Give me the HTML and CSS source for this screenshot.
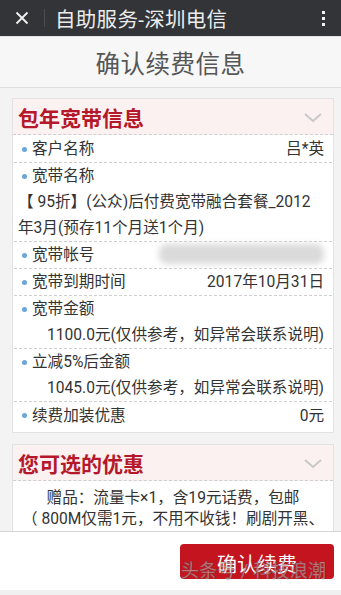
FILE: index.html
```html
<!DOCTYPE html>
<html lang="zh">
<head>
<meta charset="utf-8">
<link rel="stylesheet" href="styles.css">
</head>
<body>
<div class="page">
  <div class="topbar">
    <span class="close">
      <svg width="14" height="14" viewBox="0 0 14 14"><path d="M1.5 1.5 L12.5 12.5 M12.5 1.5 L1.5 12.5" stroke="#f2f2f2" stroke-width="1.8" fill="none"/></svg>
    </span>
    <span class="divider"></span>
    <span class="apptitle">自助服务-深圳电信</span>
    <span class="dots"><i></i><i></i><i></i></span>
  </div>
  <div class="header">确认续费信息</div>
  <div class="content">
    <div class="card">
      <div class="card-head">
        <span class="card-title">包年宽带信息</span>
        <svg class="chev" width="18" height="10" viewBox="0 0 18 10"><path d="M1 1 L9 8 L17 1" stroke="#c8c8c8" stroke-width="2" fill="none"/></svg>
      </div>
      <div class="row">
        <span class="label"><b class="dot"></b>客户名称</span>
        <span class="val">吕*英</span>
      </div>
      <div class="row col">
        <span class="label"><b class="dot"></b>宽带名称</span>
        <span class="para">【 95折】(公众)后付费宽带融合套餐_2012年3月(预存11个月送1个月)</span>
      </div>
      <div class="row">
        <span class="label"><b class="dot"></b>宽带帐号</span>
        <span class="blur"></span>
      </div>
      <div class="row">
        <span class="label"><b class="dot"></b>宽带到期时间</span>
        <span class="val">2017年10月31日</span>
      </div>
      <div class="row col">
        <span class="label"><b class="dot"></b>宽带金额</span>
        <span class="val right">1100.0元(仅供参考，如异常会联系说明)</span>
      </div>
      <div class="row col">
        <span class="label"><b class="dot"></b>立减5%后金额</span>
        <span class="val right">1045.0元(仅供参考，如异常会联系说明)</span>
      </div>
      <div class="row last">
        <span class="label"><b class="dot"></b>续费加装优惠</span>
        <span class="val">0元</span>
      </div>
    </div>
    <div class="card">
      <div class="card-head">
        <span class="card-title">您可选的优惠</span>
        <svg class="chev" width="18" height="10" viewBox="0 0 18 10"><path d="M1 1 L9 8 L17 1" stroke="#c8c8c8" stroke-width="2" fill="none"/></svg>
      </div>
      <div class="offer">赠品：流量卡×1，含19元话费，包邮<br>（ 800M仅需1元，不用不收钱！刷剧开黑、<br>车载热点，流量无忧！）</div>
    </div>
  </div>
  <div class="footer">
    <button class="confirm">确认续费</button>
    <span class="watermark">头条号 / 科技浪潮</span>
  </div>
  <div class="bottomstrip"></div>
</div>
</body>
</html>
```
FILE: styles.css
```css
* { box-sizing: border-box; }
html, body { margin: 0; padding: 0; }
body {
  font-family: Roboto, "Noto Sans CJK SC", sans-serif;
  background: #f3f3f3;
  color: #333;
}
.page {
  width: 341px;
  height: 595px;
  display: flex;
  flex-direction: column;
  overflow: hidden;
}
.topbar {
  height: 36px;
  flex: none;
  background: #323437;
  display: flex;
  align-items: center;
  padding-left: 15px;
  color: #ececec;
}
.close { display: flex; width: 14px; height: 14px; }
.divider {
  width: 1px;
  height: 18px;
  background: #4a4c4f;
  margin-left: 15px;
}
.apptitle {
  margin-left: 10px;
  font-size: 20.5px;
  letter-spacing: 0.3px;
  flex: 1;
}
.dots {
  display: flex;
  flex-direction: column;
  gap: 3px;
  margin-right: 16px;
}
.dots i {
  display: block;
  width: 3px;
  height: 3px;
  background: #f2f2f2;
}
.header {
  height: 52px;
  flex: none;
  background: #f7f7f7;
  border-top: 1px solid #e4e4e4;
  border-bottom: 1px solid #dedede;
  display: flex;
  align-items: center;
  justify-content: center;
  font-size: 24.5px;
  color: #565656;
  letter-spacing: 0.5px;
}
.content {
  flex: 1;
  overflow: hidden;
  padding: 10px 7px 0 12px;
  display: flex;
  flex-direction: column;
  gap: 11px;
}
.card {
  flex: none;
  background: #fff;
  border: 1px solid #e2e2e2;
  padding: 0 1px;
}
.card-head {
  height: 36px;
  background: #fcf1f1;
  border-bottom: 1px dashed #cfcfcf;
  margin: 0 -1px;
  display: flex;
  align-items: center;
  justify-content: space-between;
  padding: 0 11px 0 5px;
}
.card-title {
  font-size: 21px;
  font-weight: bold;
  color: #b5172b;
}
.chev { margin-top: 2px; }
.row {
  display: flex;
  justify-content: space-between;
  align-items: center;
  min-height: 27px;
  border-bottom: 1px dashed #cfcfcf;
  font-size: 15.6px;
  line-height: 26px;
  padding: 0 8px 0 4px;
}
.row:nth-child(2) { padding-top: 1px; }
.row.col {
  flex-direction: column;
  align-items: stretch;
}
.row.last { border-bottom: none; margin-bottom: 3px; }
.label { display: flex; align-items: center; color: #333; }
.dot {
  display: inline-block;
  width: 5px;
  height: 5px;
  border-radius: 50%;
  background: #6aa6d8;
  margin: 0 5px 0 4px;
}
.val { color: #333; }
.val.right { text-align: right; }
.para { color: #333; }
.blur {
  width: 165px;
  height: 20px;
  background: #dadada;
  filter: blur(3px);
  border-radius: 8px;
  margin-top: -2px;
}
.offer {
  text-align: center;
  font-size: 15.6px;
  line-height: 21px;
  padding: 7px 4px 8px;
  color: #333;
}
.footer {
  height: 59px;
  flex: none;
  background: #fff;
  border-top: 1px solid #d4d4d4;
  position: relative;
  display: flex;
  justify-content: flex-end;
  align-items: center;
  padding-right: 7px;
}
.confirm {
  width: 154px;
  height: 35px;
  margin-top: 1px;
  background: #c3141f;
  border: none;
  border-radius: 4px;
  color: #fff;
  font-family: Roboto, "Noto Sans CJK SC", sans-serif;
  font-size: 20px;
  padding: 4px 0 0;
}
.watermark {
  position: absolute;
  left: 181px;
  top: 24px;
  font-size: 18px;
  color: rgba(255, 255, 255, 0.45);
  -webkit-text-stroke: 0.7px rgba(80, 80, 80, 0.55);
  letter-spacing: 0.3px;
  white-space: nowrap;
}
.bottomstrip {
  height: 5px;
  flex: none;
  background: #f0f0f0;
}
```
